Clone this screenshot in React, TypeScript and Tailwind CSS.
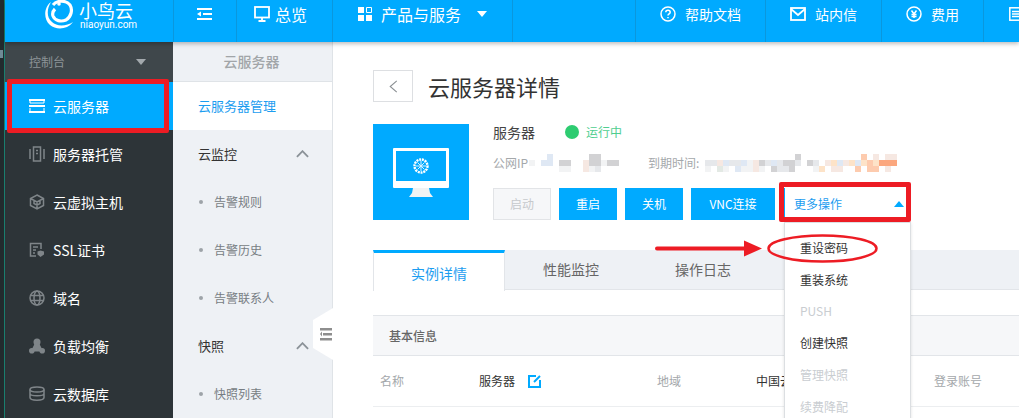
import { ReactNode } from "react"

const cjk = "font-['Noto_Sans_CJK_SC','Liberation_Sans',sans-serif]"

const palette: Record<string, string> = {
  a: "#e6e8eb",
  g: "#d2d2d4",
  b: "#dfe8f4",
  p: "#f6e8e2",
  o: "#fdcbae",
  r: "#fba77e",
  l: "#f2f3f4",
  c: "#e3e9e4",
  y: "#fde3c8",
  ".": "transparent",
}

const ipMosaic = ["...b......gg...", "l.bb.gg..pgglgg", ".....ll..pla..."]
const dateMosaic = [
  "...............g..........o.p.pp",
  "aapbaablpgabagga.ga.pybpybyoyrrr",
  "l.cl.bllpl.gaag...ly.pp..o.oo.p.",
]

function Mosaic({ rows }: { rows: string[] }) {
  return (
    <div className="flex flex-col">
      {rows.map((row, i) => (
        <div key={i} className="flex">
          {row.split("").map((c, j) => (
            <span key={j} className="h-[6px] w-[6px]" style={{ background: palette[c] }} />
          ))}
        </div>
      ))}
    </div>
  )
}

function Icon({ children, className = "h-4 w-4" }: { children: ReactNode; className?: string }) {
  return (
    <svg viewBox="0 0 16 16" className={className} fill="none" stroke="currentColor" strokeWidth="1.5">
      {children}
    </svg>
  )
}

const sideItems: { label: string; icon: ReactNode }[] = [
  {
    label: "服务器托管",
    icon: (
      <>
        <rect x="4.500" y="1" width="7" height="14" />
        <path d="M1 3v10M15 3v10M7 4.500h2M7 7.500h2M8 11h.1" />
      </>
    ),
  },
  {
    label: "云虚拟主机",
    icon: <path d="M8 1l6.500 3.500v7L8 15l-6.500-3.500v-7zM1.500 4.500L8 8l6.500-3.500M8 8v7M5 6.500v3l3 1.700 3-1.700v-3" />,
  },
  {
    label: "SSL证书",
    icon: (
      <>
        <path d="M7 14H1.500V1.500h10.500V7" />
        <path d="M4 5h5M4 8h3M4 11h2" />
        <path d="M11.500 8.500l3.500 1v3l-3.500 2.500-3-2.500v-3z" fill="currentColor" stroke="none" />
      </>
    ),
  },
  {
    label: "域名",
    icon: (
      <>
        <circle cx="8" cy="8" r="7" />
        <ellipse cx="8" cy="8" rx="3" ry="7" />
        <path d="M1.500 5.500h13M1.500 10.500h13" />
      </>
    ),
  },
  {
    label: "负载均衡",
    icon: (
      <g fill="currentColor" stroke="none">
        <circle cx="8" cy="4" r="3.500" />
        <circle cx="2.800" cy="12.800" r="2.800" />
        <circle cx="13.200" cy="12.800" r="2.800" />
        <path d="M5.500 6h5l3 6-2.500 1.500H5L2.500 12z" />
      </g>
    ),
  },
  {
    label: "云数据库",
    icon: (
      <>
        <ellipse cx="8" cy="3.500" rx="7" ry="2.500" />
        <path d="M1 7.500c0 3 14 3 14 0M1 11.500c0 3.500 14 3.500 14 0M1 3.500v8M15 3.500v8" />
      </>
    ),
  },
]

function Chevron() {
  return (
    <svg viewBox="0 0 14 8" className="h-2 w-[13px] text-[#8b9298]" fill="none" stroke="currentColor" strokeWidth="2">
      <path d="M1 7l6-6 6 6" />
    </svg>
  )
}

function SubItem({ label }: { label: string }) {
  return (
    <div className="flex h-12 items-center pl-[26px] text-[12px] text-[#777d83]">
      <span className="mr-[11px] h-[4px] w-[4px] rounded-full bg-[#9da3a8]" />
      {label}
    </div>
  )
}

function SubGroup({ label }: { label: string }) {
  return (
    <div className="flex h-12 items-center justify-between pl-[25px] pr-[23px] text-[13px] text-[#333]">
      {label}
      <Chevron />
    </div>
  )
}

function NavItem({ icon, label, className }: { icon: ReactNode; label: string; className: string }) {
  return (
    <div className={`flex shrink-0 items-center border-l border-[#0a97dd] pb-[14px] ${className}`}>
      {icon}
      <span>{label}</span>
    </div>
  )
}

function ActionButton({ label, className = "w-[58px]" }: { label: string; className?: string }) {
  return (
    <div className={`flex h-8 items-center justify-center bg-[#00aaff] text-[12px] text-white ${className}`}>
      {label}
    </div>
  )
}

function MenuRow({ label, disabled }: { label: string; disabled?: boolean }) {
  return (
    <div className={`flex h-[31.75px] items-center pl-[15px] text-[12px] ${disabled ? "text-[#c9cdd1]" : "text-[#333]"}`}>
      {label}
    </div>
  )
}

export default function App() {
  return (
    <div className={`relative flex h-[418px] w-[1019px] overflow-hidden bg-white ${cjk}`}>
      <div className="relative h-full w-[5px] shrink-0 border-r border-[#1a7f6f] bg-[#222b2e]">
        <span className="absolute left-0 top-[50px] h-[8px] w-[3px] bg-[#6f8a96]" />
      </div>

      <div className="flex min-w-0 flex-1 flex-col">
        <header className="relative z-10 flex h-[42px] shrink-0 bg-[#00aaff] text-white shadow-[0_2px_4px_rgba(0,0,0,0.25)]">
          <div className="relative w-[168px] shrink-0 overflow-hidden">
            <svg viewBox="0 0 30 32" className="absolute left-[40px] top-[-1px] h-[32px] w-[30px]" fill="none" stroke="white">
              <path d="M6 3C-1 8-2 20 5 26c6 5 17 5 23-3-6 4-16 5-21 0C1 18 2 9 6 3z" fill="white" stroke="none" />
              <path d="M8 6c4-5 13-5 17 0 3 5 1 12-4 15-5 2-11 1-13-4-1-3 0-5 2-7" strokeWidth="3.200" />
              <circle cx="14" cy="5" r="1.800" fill="white" stroke="none" />
            </svg>
            <div className="absolute left-[74px] top-0 text-[18px] leading-[20px] text-white">小鸟云</div>
            <div className="absolute left-[75px] top-[20px] font-['Roboto',sans-serif] text-[10px] leading-[10px] text-white">niaoyun.com</div>
          </div>
          <div className="flex w-[63px] shrink-0 items-center justify-center border-l border-[#0a97dd] pb-[14px] pr-[2px]">
            <svg viewBox="0 0 15 12" className="h-[12px] w-[15px]" fill="white">
              <path d="M0 0h15v2H0zM6 5h9v2H6zM0 10h15v2H0zM4 3.500v5L0 6z" />
            </svg>
          </div>
          <NavItem
            className="w-[96px] gap-[5px] pl-[17px] text-[16px]"
            label="总览"
            icon={
              <svg viewBox="0 0 16 16" className="h-4 w-4" fill="none" stroke="white" strokeWidth="1.800">
                <rect x="1" y="1" width="14" height="10.500" />
                <path d="M8 11.500V15M4.500 15h7" />
              </svg>
            }
          />
          <div className="flex w-[180px] shrink-0 items-center border-l border-[#0a97dd] pb-[14px] pl-[25px] text-[16px]">
            <svg viewBox="0 0 14 14" className="mr-[9px] h-[14px] w-[14px]" fill="white">
              <path d="M0 0h6v6H0zM0 8h6v6H0zM8 8h6v6H8z" />
              <path d="M8.500.500h5v5h-5z" fill="none" stroke="white" />
            </svg>
            产品与服务
            <span className="ml-[16px] h-0 w-0 border-x-[5px] border-t-[6px] border-x-transparent border-t-white" />
          </div>
          <div className="w-[123px] shrink-0 border-l border-[#0a97dd]" />
          <NavItem
            className="w-[130px] gap-[9px] pl-[24px] text-[14px]"
            label="帮助文档"
            icon={
              <svg viewBox="0 0 16 16" className="h-4 w-4" fill="none" stroke="white" strokeWidth="1.500">
                <circle cx="8" cy="8" r="7" />
                <path d="M5.800 6.200C5.800 3.600 10.200 3.600 10.200 6.200 10.200 7.800 8 7.800 8 9.500M8 11v1.300" />
              </svg>
            }
          />
          <NavItem
            className="w-[116px] gap-[9px] pl-[24px] text-[14px]"
            label="站内信"
            icon={
              <svg viewBox="0 0 16 14" className="h-[14px] w-[16px]" fill="none" stroke="white" strokeWidth="1.800">
                <rect x="1" y="1" width="14" height="12" />
                <path d="M1 2l7 6 7-6" />
              </svg>
            }
          />
          <NavItem
            className="w-[102px] gap-[9px] pl-[24px] text-[14px]"
            label="费用"
            icon={
              <svg viewBox="0 0 16 16" className="h-4 w-4" fill="none" stroke="white" strokeWidth="1.500">
                <circle cx="8" cy="8" r="7" />
                <path d="M5.500 4.500L8 8l2.500-3.500M8 8v4M5.500 8.500h5M5.500 10.500h5" />
              </svg>
            }
          />
          <div className="flex min-w-0 flex-1 items-center overflow-hidden border-l border-[#0a97dd] pb-[14px] pl-[25px]">
            <svg viewBox="0 0 12 14" className="h-[14px] w-[12px] shrink-0" fill="none" stroke="white" strokeWidth="1.500">
              <rect x="0.800" y="0.800" width="14" height="12.400" />
              <path d="M3 4.500h9M3 7h9M3 9.500h9" />
            </svg>
          </div>
        </header>

        <div className="flex min-h-0 flex-1">
          <aside className="w-[168px] shrink-0 bg-[#2d3438] text-[14px] text-white">
            <div className="flex h-[40px] items-center justify-between bg-[#3f474b] pl-[24px] pr-[27px] text-[12px] text-[#8d9498]">
              控制台
              <span className="h-0 w-0 border-x-[5px] border-t-[6px] border-x-transparent border-t-[#a3a9ad]" />
            </div>
            <div className="flex h-[48px] items-center gap-[8px] bg-[#00aaff] pl-[24px]">
              <svg viewBox="0 0 16 14" className="h-[14px] w-[16px]" fill="none" stroke="white" strokeWidth="1.800">
                <path d="M0 1h16M0 7h16M0 13h16" />
                <path d="M1 1v3h14V1M1 9v4h14V9" strokeWidth="1" />
              </svg>
              云服务器
            </div>
            {sideItems.map((item) => (
              <div key={item.label} className="flex h-[48px] items-center gap-[8px] pl-[24px]">
                <span className="text-[#7f8589]">
                  <Icon>{item.icon}</Icon>
                </span>
                {item.label}
              </div>
            ))}
          </aside>

          <nav className="relative w-[160px] shrink-0 border-r border-[#dfe3e7] bg-[#eef1f5]">
            <div className="flex h-[40px] items-center justify-center border-b border-[#dfe3e7] pr-[2px] text-[14px] font-medium text-[#a1a5a8]">
              云服务器
            </div>
            <div className="flex h-[48px] items-center bg-white pl-[25px] text-[13px] text-[#1c9df0]">云服务器管理</div>
            <SubGroup label="云监控" />
            <SubItem label="告警规则" />
            <SubItem label="告警历史" />
            <SubItem label="告警联系人" />
            <SubGroup label="快照" />
            <SubItem label="快照列表" />
            <svg viewBox="0 0 20 52" className="absolute right-[-1px] top-[266px] h-[52px] w-[20px]">
              <path d="M20 0L0 12v28l20 12z" fill="white" />
              <path d="M7 20h12v2.500H7zM10 25h9v2.500h-9zM7 30h12v2.500H7zM9 23.500v5L7 26z" fill="#8e8e8e" />
            </svg>
          </nav>

          <main className="min-w-0 flex-1 pl-[40px] pt-[28px]">
            <div className="flex items-center">
              <div className="flex h-8 w-10 items-center justify-center border border-[#dddfe2]">
                <svg viewBox="0 0 9 14" className="h-[13px] w-[9px]" fill="none" stroke="#8a8f93" strokeWidth="1.200">
                  <path d="M8 1L1 7l7 6" />
                </svg>
              </div>
              <h1 className="ml-[15px] text-[22px] leading-8 text-[#333]">云服务器详情</h1>
            </div>

            <div className="mt-[22px] flex">
              <div className="flex h-[96px] w-[96px] items-center justify-center bg-[#00aaff]">
                <svg viewBox="0 0 56 49" className="h-[49px] w-[56px]">
                  <path d="M1 0h54a1 1 0 0 1 1 1v38a1 1 0 0 1-1 1H1a1 1 0 0 1-1-1V1a1 1 0 0 1 1-1zM3 3v30h50V3z" fill="white" fillRule="evenodd" />
                  <path d="M20 40h16l1 5 3 4H16l3-4z" fill="#f1f3f4" />
                  <circle cx="28" cy="18" r="6.500" fill="none" stroke="white" strokeWidth="2.400" strokeDasharray="2 0.800" />
                  <path d="M28 13v10M23 18h10M24.500 14.500l7 7M31.500 14.500l-7 7" stroke="white" strokeWidth="1" opacity="0.850" />
                </svg>
              </div>
              <div className="ml-6 flex flex-col">
                <div className="flex h-4 items-center text-[14px] text-[#444]">
                  服务器
                  <span className="ml-[30px] h-[14px] w-[14px] rounded-full bg-[#2ecc71]" />
                  <span className="ml-[7px] text-[12px] text-[#4fce8f]">运行中</span>
                </div>
                <div className="mt-[14px] flex h-[18px] items-center text-[12px] text-[#a4a8ab]">
                  <span className="w-[36px] whitespace-nowrap">公网IP</span>
                  <span className="mr-[29px]">
                    <Mosaic rows={ipMosaic} />
                  </span>
                  <span className="w-[57px] whitespace-nowrap">到期时间:</span>
                  <Mosaic rows={dateMosaic} />
                </div>
                <div className="mt-[16px] flex gap-2">
                  <div className="flex h-8 w-[58px] items-center justify-center border border-[#e2e4e7] bg-[#f6f7f9] text-[12px] text-[#c6c9cc]">启动</div>
                  <ActionButton label="重启" />
                  <ActionButton label="关机" />
                  <ActionButton label="VNC连接" className="w-[84px]" />
                  <div className="ml-[1px] flex h-8 w-[122px] items-center justify-between border-l border-[#00aaff] pl-[9px] pr-[2px] text-[12px] text-[#1c9df0]">
                    更多操作
                    <span className="h-0 w-0 border-x-[5px] border-b-[6px] border-x-transparent border-b-[#00aaff]" />
                  </div>
                </div>
              </div>
            </div>

            <div className="mt-[30px] flex h-[40px] border-b border-[#e2e5e9] bg-[#eef1f5] text-[14px] text-[#666]">
              <div className="-mb-px flex h-[41px] w-[132px] items-center justify-center border-x border-[#e2e5e9] border-t-[3px] border-t-[#00aaff] bg-white pt-[2px] text-[#1c9df0]">实例详情</div>
              <div className="flex w-[132px] items-center justify-center">性能监控</div>
              <div className="flex w-[132px] items-center justify-center">操作日志</div>
            </div>

            <div className="mt-[25px] flex h-[41px] items-center border-y border-[#e2e5e9] bg-[#f6f7f9] pl-[16px] text-[12px] font-medium text-[#666]">基本信息</div>
            <div className="flex h-[51px] items-center border-b border-[#eceef0] text-[12px]">
              <span className="ml-[7px] w-[99px] text-[#a4a8ab]">名称</span>
              <span className="flex w-[178px] items-center text-[#333]">
                服务器
                <svg viewBox="0 0 14 14" className="ml-[13px] h-[14px] w-[14px]" fill="none" stroke="#00aaff" strokeWidth="2">
                  <path d="M8 2H1v11h11V6" />
                  <path d="M6 8l6-6" />
                </svg>
              </span>
              <span className="w-[99px] text-[#a4a8ab]">地域</span>
              <span className="w-[178px] whitespace-nowrap text-[#333]">中国云</span>
              <span className="whitespace-nowrap text-[#a4a8ab]">登录账号</span>
            </div>
          </main>
        </div>
      </div>

      <div className="absolute left-[784px] top-[222px] z-20 h-[200px] w-[127px] border border-[#dcdfe2] bg-white shadow-[0_1px_3px_rgba(0,0,0,0.12)]">
        <div className="pt-[9px]">
          <MenuRow label="重设密码" />
          <MenuRow label="重装系统" />
          <MenuRow label="PUSH" disabled />
          <MenuRow label="创建快照" />
          <MenuRow label="管理快照" disabled />
          <MenuRow label="续费降配" disabled />
        </div>
      </div>

      {/* red annotations drawn over the screenshot */}
      <div className="absolute left-[7px] top-[79px] z-30 h-[54px] w-[162px] rounded-[2px] border-[5px] border-[#ed1c24]" />
      <div className="absolute left-[779px] top-[182px] z-30 h-[40px] w-[132px] rounded-[2px] border-[5px] border-[#ed1c24]" />
      <svg viewBox="0 0 230 32" className="absolute left-[655px] top-[233px] z-30 h-[32px] w-[230px]" fill="none">
        <ellipse cx="167.500" cy="15.500" rx="54" ry="13" stroke="#ed1c24" strokeWidth="2.500" />
        <path d="M2 15.500h90" stroke="#ed1c24" strokeWidth="4" strokeLinecap="round" />
        <path d="M89 7.500l18 8-18 8z" fill="#ed1c24" />
      </svg>
    </div>
  )
}
